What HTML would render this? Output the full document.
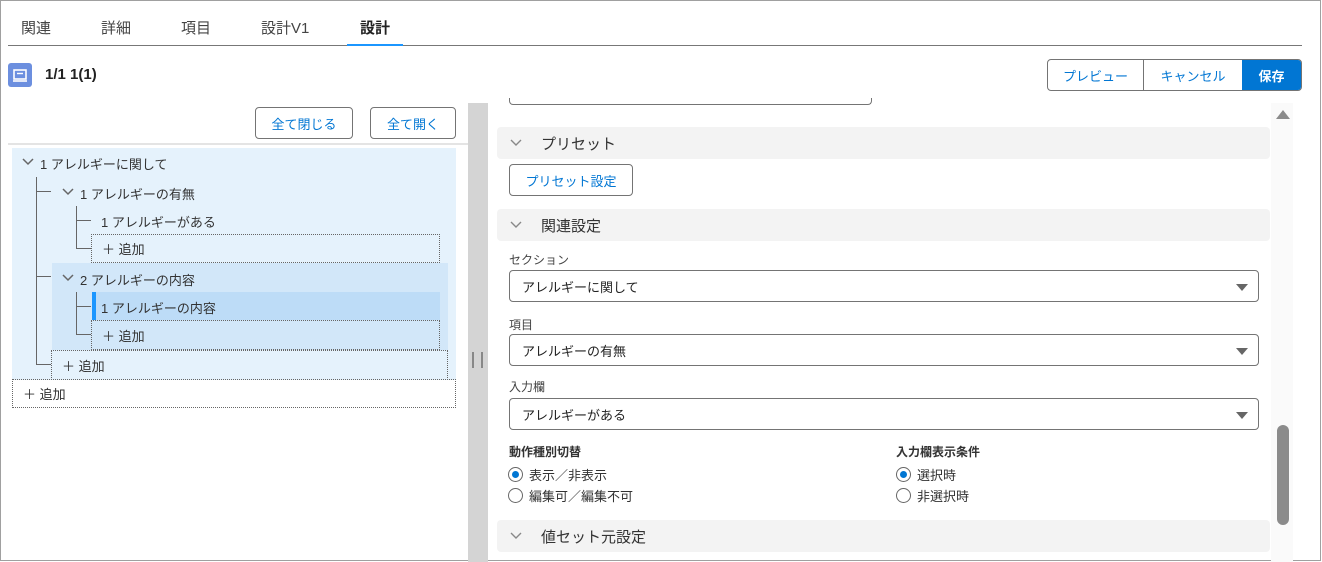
<!DOCTYPE html>
<html><head><meta charset="utf-8"><style>
*{box-sizing:border-box;margin:0;padding:0}
body{width:1322px;height:562px;background:#fff;font-family:"Liberation Sans","Noto Sans CJK JP",sans-serif;color:#3e3e3c;position:relative;overflow:hidden;font-size:13px}
.a{position:absolute}
.frame{left:0;top:0;width:1321px;height:561px;border:1px solid #a0a0a0}
.tab{top:17px;font-size:15px;color:#444}
.btn{border:1px solid #747474;border-radius:4px;color:#0176d3;display:flex;align-items:center;justify-content:center;font-size:13px;background:#fff}
.sec{left:497px;width:773px;height:32px;background:#f3f3f3;border-radius:4px;font-size:15px;color:#333;display:flex;align-items:center}
.sec .chev{margin-left:12px;margin-right:18px}
.lbl{left:509px;font-size:12px;color:#444}
.sel{left:509px;width:750px;height:32px;border:1px solid #747474;border-radius:4px;font-size:13px;color:#222;padding-left:12px;display:flex;align-items:center}
.sel:after{content:"";position:absolute;right:10px;top:13px;border-left:6px solid transparent;border-right:6px solid transparent;border-top:7px solid #666}
.row{font-size:13px;color:#333;display:flex;align-items:center}
.dot{border:1px dotted #666}
.ln{background:#666}
.radio{width:15px;height:15px;border:1px solid #666;border-radius:50%;display:inline-block;position:relative;vertical-align:middle;margin-right:6px;background:#fff}
.radio.on:after{content:"";position:absolute;left:3px;top:3px;width:7px;height:7px;border-radius:50%;background:#0176d3}
.rl{font-size:13px;color:#333;display:flex;align-items:center}
</style></head><body>
<div class="a frame"></div>
<div class="a tab" style="left:21px">関連</div>
<div class="a tab" style="left:101px">詳細</div>
<div class="a tab" style="left:181px">項目</div>
<div class="a tab" style="left:261px">設計V1</div>
<div class="a tab" style="left:360px;font-weight:bold;color:#222">設計</div>
<div class="a" style="left:8px;top:45px;width:1294px;height:1px;background:#777"></div>
<div class="a" style="left:347px;top:44px;width:56px;height:2px;background:#1b96ff"></div>

<div class="a" style="left:8px;top:63px;width:24px;height:24px;background:#6c8fdf;border-radius:3px"><svg width="24" height="24"><rect x="6" y="7" width="12" height="9" fill="none" stroke="#fff" stroke-width="1.6"/><line x1="9" y1="10.5" x2="15" y2="10.5" stroke="#fff" stroke-width="1.4"/><line x1="5" y1="18" x2="19" y2="18" stroke="#fff" stroke-width="1.6"/></svg></div>
<div class="a" style="left:45px;top:66px;font-size:15px;font-weight:bold;color:#222">1/1 1(1)</div>

<div class="a" style="left:1047px;top:59px;width:255px;height:32px;border:1px solid #747474;border-radius:4px;overflow:hidden;display:flex">
<div style="width:96px;border-right:1px solid #747474;color:#0176d3;display:flex;align-items:center;justify-content:center">プレビュー</div>
<div style="width:98px;color:#0176d3;display:flex;align-items:center;justify-content:center">キャンセル</div>
<div style="flex:1;background:#0176d3;color:#fff;font-weight:bold;display:flex;align-items:center;justify-content:center">保存</div></div>

<div class="a btn" style="left:255px;top:107px;width:98px;height:32px">全て閉じる</div>
<div class="a btn" style="left:370px;top:107px;width:86px;height:32px">全て開く</div>
<div class="a" style="left:8px;top:143px;width:460px;height:2px;background:#e4e4e4"></div>

<div class="a" style="left:12px;top:148px;width:444px;height:232px;background:#e5f2fc"></div>
<div class="a" style="left:52px;top:263px;width:396px;height:87px;background:#d2e7f9"></div>
<div class="a" style="left:92px;top:292px;width:348px;height:28px;background:#bddcf7"></div>
<div class="a" style="left:92px;top:292px;width:4px;height:28px;background:#1b96ff"></div>

<div class="a ln" style="left:36px;top:177px;width:1px;height:188px"></div>
<div class="a ln" style="left:36px;top:191px;width:15px;height:1px"></div>
<div class="a ln" style="left:36px;top:276px;width:15px;height:1px"></div>
<div class="a ln" style="left:36px;top:364px;width:15px;height:1px"></div>
<div class="a ln" style="left:76px;top:206px;width:1px;height:43px"></div>
<div class="a ln" style="left:76px;top:220px;width:15px;height:1px"></div>
<div class="a ln" style="left:76px;top:248px;width:15px;height:1px"></div>
<div class="a ln" style="left:76px;top:292px;width:1px;height:42px"></div>
<div class="a ln" style="left:76px;top:306px;width:15px;height:1px"></div>
<div class="a ln" style="left:76px;top:334px;width:15px;height:1px"></div>

<svg class="a" style="left:21px;top:157px" width="14" height="10"><path d="M2 2l5 5 5-5" fill="none" stroke="#666" stroke-width="1.5"/></svg>
<div class="a row" style="left:40px;top:154px">1 アレルギーに関して</div>
<svg class="a" style="left:61px;top:187px" width="14" height="10"><path d="M2 2l5 5 5-5" fill="none" stroke="#666" stroke-width="1.5"/></svg>
<div class="a row" style="left:80px;top:184px">1 アレルギーの有無</div>
<div class="a row" style="left:101px;top:212px">1 アレルギーがある</div>
<div class="a dot row" style="left:91px;top:234px;width:349px;height:29px;padding-left:10px">＋ 追加</div>
<svg class="a" style="left:61px;top:273px" width="14" height="10"><path d="M2 2l5 5 5-5" fill="none" stroke="#666" stroke-width="1.5"/></svg>
<div class="a row" style="left:80px;top:270px">2 アレルギーの内容</div>
<div class="a row" style="left:101px;top:298px">1 アレルギーの内容</div>
<div class="a dot row" style="left:91px;top:320px;width:349px;height:30px;padding-left:10px">＋ 追加</div>
<div class="a dot row" style="left:51px;top:350px;width:397px;height:30px;padding-left:10px">＋ 追加</div>
<div class="a dot row" style="left:12px;top:379px;width:444px;height:29px;padding-left:10px">＋ 追加</div>

<div class="a" style="left:468px;top:103px;width:20px;height:459px;background:#d4d4d4"></div>
<div class="a" style="left:472px;top:352px;width:2px;height:16px;border-left:1px solid #888;border-right:1px solid #888"></div>
<div class="a" style="left:481px;top:352px;width:2px;height:16px;border-left:1px solid #888;border-right:1px solid #888"></div>

<div class="a" style="left:1271px;top:103px;width:22px;height:459px;background:#fafafa"></div>
<div class="a" style="left:1276px;top:110px;border-left:7px solid transparent;border-right:7px solid transparent;border-bottom:9px solid #8b8b8b"></div>
<div class="a" style="left:1277px;top:425px;width:12px;height:100px;background:#8b8b8b;border-radius:6px"></div>

<div class="a" style="left:509px;top:98px;width:363px;height:7px;border:1px solid #747474;border-top:none;border-radius:0 0 4px 4px"></div>
<div class="a sec" style="top:127px"><svg class="chev" width="14" height="10"><path d="M2 2l5 5 5-5" fill="none" stroke="#888" stroke-width="1.4"/></svg>プリセット</div>
<div class="a btn" style="left:509px;top:164px;width:124px;height:32px">プリセット設定</div>
<div class="a sec" style="top:209px"><svg class="chev" width="14" height="10"><path d="M2 2l5 5 5-5" fill="none" stroke="#888" stroke-width="1.4"/></svg>関連設定</div>
<div class="a lbl" style="top:251px">セクション</div>
<div class="a sel" style="top:270px">アレルギーに関して</div>
<div class="a lbl" style="top:316px">項目</div>
<div class="a sel" style="top:334px">アレルギーの有無</div>
<div class="a lbl" style="top:378px">入力欄</div>
<div class="a sel" style="top:398px">アレルギーがある</div>
<div class="a" style="left:509px;top:443px;font-size:12px;font-weight:bold;color:#333">動作種別切替</div>
<div class="a rl" style="left:508px;top:465px"><span class="radio on"></span>表示／非表示</div>
<div class="a rl" style="left:508px;top:486px"><span class="radio"></span>編集可／編集不可</div>
<div class="a" style="left:896px;top:443px;font-size:12px;font-weight:bold;color:#333">入力欄表示条件</div>
<div class="a rl" style="left:896px;top:465px"><span class="radio on"></span>選択時</div>
<div class="a rl" style="left:896px;top:486px"><span class="radio"></span>非選択時</div>
<div class="a sec" style="top:520px"><svg class="chev" width="14" height="10"><path d="M2 2l5 5 5-5" fill="none" stroke="#888" stroke-width="1.4"/></svg>値セット元設定</div>
</body></html>
